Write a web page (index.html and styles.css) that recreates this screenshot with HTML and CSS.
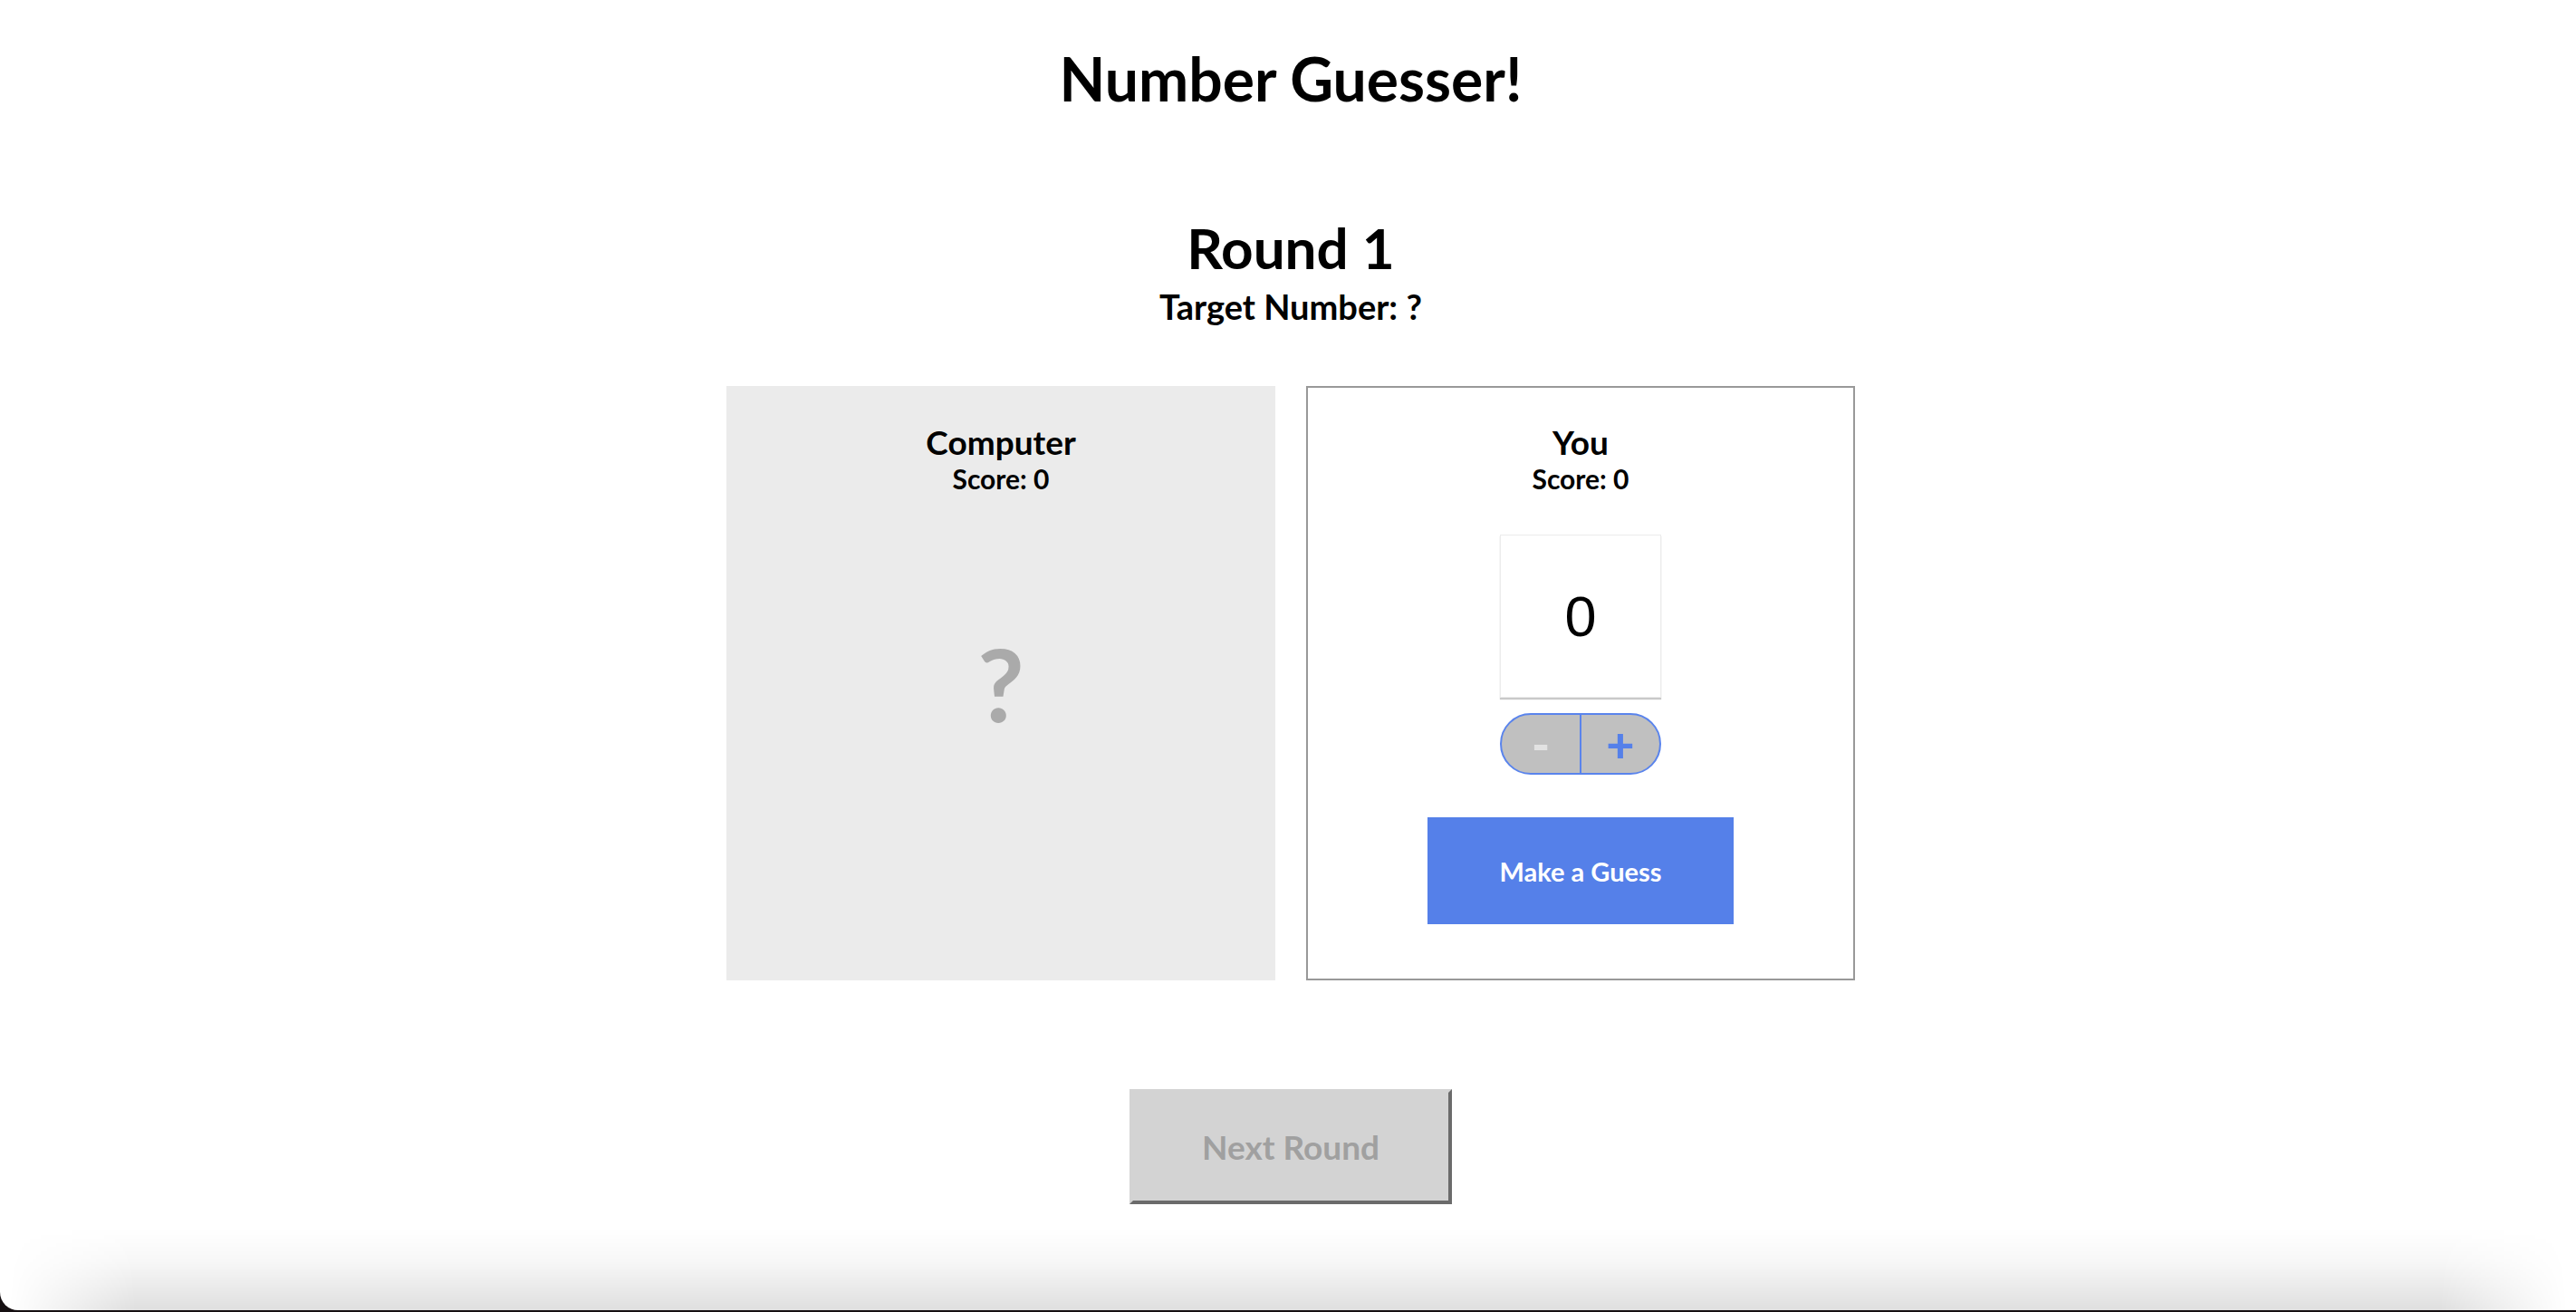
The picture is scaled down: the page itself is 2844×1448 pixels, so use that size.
FILE: index.html
```html
<!DOCTYPE html>
<html lang="en">
<head>
<meta charset="utf-8">
<title>Number Guesser!</title>
<link rel="stylesheet" href="styles.css">
</head>
<body>
<main class="app">
  <h1 class="title">Number Guesser!</h1>
  <section class="round">
    <h2 class="round-title">Round 1</h2>
    <h3 class="target">Target Number: ?</h3>
  </section>
  <div class="players">
    <div class="card card--computer">
      <h3 class="card-name">Computer</h3>
      <p class="card-score">Score: 0</p>
      <div class="computer-guess">?</div>
    </div>
    <div class="card card--human">
      <h3 class="card-name">You</h3>
      <p class="card-score">Score: 0</p>
      <div class="guess-box">0</div>
      <div class="stepper">
        <button class="step step--minus" disabled>-</button>
        <button class="step step--plus">+</button>
      </div>
      <button class="guess-btn">Make a Guess</button>
    </div>
  </div>
  <div class="next-wrap">
    <button class="next-btn" disabled>Next Round</button>
  </div>
</main>
<div class="bottom-shade"></div>
</body>
</html>
```
FILE: styles.css
```css
html {
  background: #161012;
  overflow: hidden;
  height: 1448px;
}

body {
  margin: 0;
  height: 1446px;
  box-sizing: border-box;
  padding-left: 6px;
  background: #ffffff;
  border-bottom-left-radius: 20px;
  overflow: hidden;
  position: relative;
  font-family: "Lato", "Noto Sans", sans-serif;
  color: #000;
}

.app {
  text-align: center;
}

.title {
  margin: 48px 0 0;
  font-size: 66px;
  line-height: 77px;
  font-weight: 700;
}

.round-title {
  margin: 112px 0 0;
  font-size: 62px;
  line-height: 72px;
  font-weight: 700;
}

.target {
  margin: 8px 0 0;
  font-size: 38px;
  line-height: 43px;
  font-weight: 700;
}

.players {
  margin-top: 66px;
  display: flex;
  justify-content: center;
  gap: 34px;
}

.card {
  width: 606px;
  box-sizing: border-box;
  border: 2px solid #999999;
  padding: 38px 0 60px;
  display: flex;
  flex-direction: column;
  align-items: center;
}

.card--computer {
  background: #ebebeb;
  border-color: #ebebeb;
}

.card--human {
  background: #ffffff;
}

.card-name {
  margin: 0;
  font-size: 37px;
  line-height: 43px;
  font-weight: 700;
}

.card-score {
  margin: 2px 0 0;
  font-size: 30px;
  line-height: 35px;
  font-weight: 700;
}

.computer-guess {
  margin-top: 145px;
  font-size: 112px;
  line-height: 125px;
  font-weight: 700;
  color: #aaaaaa;
}

.guess-box {
  margin-top: 44px;
  width: 178px;
  height: 180px;
  box-sizing: border-box;
  border: 1px solid #ececec;
  box-shadow: 0 2px 1px #c9c9c9;
  display: flex;
  align-items: center;
  justify-content: center;
  font-family: "Liberation Sans", Arial, sans-serif;
  font-size: 63px;
  line-height: 1;
  font-weight: 400;
}

.stepper {
  margin-top: 17px;
  width: 178px;
  height: 68px;
  box-sizing: border-box;
  border: 2px solid #5a84ec;
  border-radius: 34px;
  overflow: hidden;
  background: #c0c0c0;
  display: flex;
}

.step {
  flex: 1;
  margin: 0;
  padding: 0;
  border: none;
  background: transparent;
  font-family: "Lato", sans-serif;
  font-size: 54px;
  line-height: 1;
  font-weight: 900;
  display: flex;
  align-items: center;
  justify-content: center;
}

.step--minus {
  color: #e2e2e2;
}

.step--plus {
  color: #5580e9;
  border-left: 2px solid #5a84ec;
}

.guess-btn {
  margin-top: 47px;
  width: 338px;
  height: 118px;
  padding: 0;
  border: none;
  background: #5580e9;
  color: #ffffff;
  font-family: "Lato", sans-serif;
  font-size: 29px;
  font-weight: 700;
}

.next-wrap {
  margin-top: 120px;
  display: flex;
  justify-content: center;
}

.next-btn {
  width: 356px;
  height: 127px;
  box-sizing: border-box;
  padding: 0;
  border: 4px solid;
  border-color: #d3d3d3 #6b6b6b #6b6b6b #d3d3d3;
  background: #d3d3d3;
  color: #a0a0a0;
  font-family: "Lato", sans-serif;
  font-size: 37px;
  font-weight: 700;
}

.bottom-shade {
  position: absolute;
  left: 0;
  right: 0;
  bottom: 0;
  height: 90px;
  pointer-events: none;
  background: linear-gradient(to bottom, rgba(0, 0, 0, 0), rgba(0, 0, 0, 0.03) 40%, rgba(0, 0, 0, 0.125));
  -webkit-mask-image: linear-gradient(to right, transparent 10px, #000 150px, #000 calc(100% - 150px), transparent calc(100% - 10px));
  mask-image: linear-gradient(to right, transparent 10px, #000 150px, #000 calc(100% - 150px), transparent calc(100% - 10px));
}
```
